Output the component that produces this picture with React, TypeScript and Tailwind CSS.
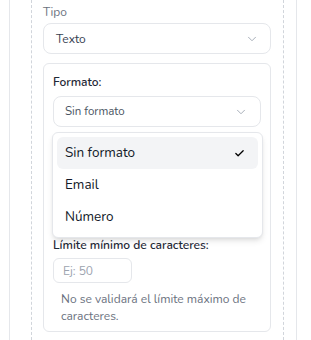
import { ChevronDown, Check } from 'lucide-react';

const font = { fontFamily: '"Nunito", Lato, "Open Sans", sans-serif' };

const opciones = ['Sin formato', 'Email', 'Número'];

// Campo de texto con formato
export default function App() {
  return (
    <div className="min-h-[340px] bg-white" style={font}>
      <div className="ml-[9px] w-[288px] min-h-[340px] border-x border-[#e5e7eb]">
        <div className="ml-[21px] w-[253px] min-h-[340px] border-x border-dashed border-[#d1d5db] pl-[11px] pr-[12px] pt-[2px]">
          <p className="text-[12px] leading-[20px] text-[#6b7280]">Tipo</p>
          <button className="mt-[1px] flex h-[31px] w-full items-center justify-between rounded-lg border border-[#e5e7eb] bg-white pl-[12px] pr-[11px] text-[12px] text-[#374151]">
            <span>Texto</span>
            <ChevronDown className="h-[14px] w-[14px] text-[#9ca3af]" strokeWidth={1.5} />
          </button>

          <div className="mt-[9px] rounded-md border border-[#e5e7eb] px-[9px] pt-[8px] pb-[6px]">
            <p className="text-[12px] font-semibold leading-[20px] text-[#1f2937]">Formato:</p>
            <div className="relative mt-[4px]">
              <button className="flex h-[31px] w-full items-center justify-between rounded-lg border border-[#e5e7eb] bg-white pl-[11px] pr-[12px] text-[11.5px] text-[#4b5563]">
                <span>Sin formato</span>
                <ChevronDown className="h-[14px] w-[14px] text-[#9ca3af]" strokeWidth={1.5} />
              </button>

              {/* menú desplegable */}
              <div className="absolute top-full -left-px -right-[2px] z-10 mt-[5px] rounded-md border border-[#e5e7eb] bg-white p-[4px] shadow-md">
                {opciones.map((op, i) => (
                  <div
                    key={op}
                    className={`flex h-[32px] items-center justify-between rounded-md pl-[8px] pr-[13px] text-[13.5px] text-[#111827] ${i === 0 ? 'bg-[#f3f4f6]' : ''}`}
                  >
                    <span>{op}</span>
                    {i === 0 && <Check className="h-[11px] w-[11px] text-black" strokeWidth={2.75} />}
                  </div>
                ))}
              </div>
            </div>

            {/* queda debajo del menú */}
            <div className="h-[108px]" />

            <p className="text-[12px] font-semibold leading-[20px] text-[#1f2937]">Límite mínimo de caracteres:</p>
            <input
              placeholder="Ej: 50"
              className="mt-[3px] h-[25px] w-[79px] rounded-md border border-[#e5e7eb] px-[9px] text-[12px] text-[#374151] placeholder:text-[#9ca3af] outline-none"
            />
            <p className="mt-[8px] px-[8px] text-[12px] leading-[17px] text-[#6b7280]">
              No se validará el límite máximo de caracteres.
            </p>
          </div>
        </div>
      </div>
    </div>
  );
}
